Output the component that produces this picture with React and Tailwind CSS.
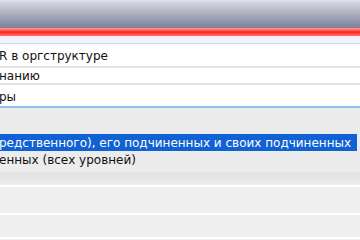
const font = { fontFamily: '"DejaVu Sans", "Liberation Sans", sans-serif' }

function OptionRow({ text, className }) {
  return (
    <div className={`flex items-center bg-white text-[12px] text-[#111] whitespace-nowrap overflow-hidden ${className}`}>
      <span className="-ml-[1px]">{text}</span>
    </div>
  )
}

export default function App() {
  return (
    <div className="w-[360px] h-[240px] overflow-hidden bg-[#ececec] flex flex-col" style={font}>
      {/* header */}
      <div className="h-[2px] shrink-0 bg-[#dcdcf2]" />
      <div className="h-[26px] shrink-0 bg-gradient-to-b from-[#d6d6de] to-[#7c8199]" />
      <div className="h-[8px] shrink-0 bg-gradient-to-b from-[#ff9a9a] via-[#ff1414] to-[#ff7070]" />
      <div className="h-[8px] shrink-0 bg-[#f1f1fd] border-b border-[#d6d6ee]" />

      {/* options list */}
      <OptionRow text="R в оргструктуре" className="h-[24px] shrink-0 pt-[2px] border-b-2 border-[#e2e2e2]" />
      <OptionRow text="нанию" className="h-[17px] shrink-0 border-b-2 border-[#e2e2e2]" />
      <OptionRow text="ры" className="h-[23px] shrink-0 pt-[3px] border-b-2 border-[#8ec2f2]" />

      {/* dropdown popup */}
      <div className="h-[64px] shrink-0 flex flex-col justify-end pb-[4px] bg-[#ececec] shadow-[0_3px_4px_rgba(0,0,0,0.18)] text-[12px] whitespace-nowrap overflow-hidden">
        <div className="h-[17px] mr-[3px] bg-[#1061d4] text-white flex items-center">
          <span className="-ml-[1px]">редственного), его подчиненных и своих подчиненных</span>
        </div>
        <div className="h-[17px] text-[#111] flex items-center">
          <span className="-ml-[1px]">енных (всех уровней)</span>
        </div>
      </div>

      {/* table rows */}
      <div className="h-[13px] shrink-0 bg-gradient-to-b from-[#e2e2e2] to-[#ededed]" />
      <div className="h-[2px] shrink-0 bg-white" />
      <div className="h-[26px] shrink-0 bg-[#efefef]" />
      <div className="h-[2px] shrink-0 bg-white" />
      <div className="h-[22px] shrink-0 bg-[#efefef]" />
      <div className="h-[2px] shrink-0 bg-white" />
      <div className="flex-1 bg-[#efefef]" />
    </div>
  )
}
